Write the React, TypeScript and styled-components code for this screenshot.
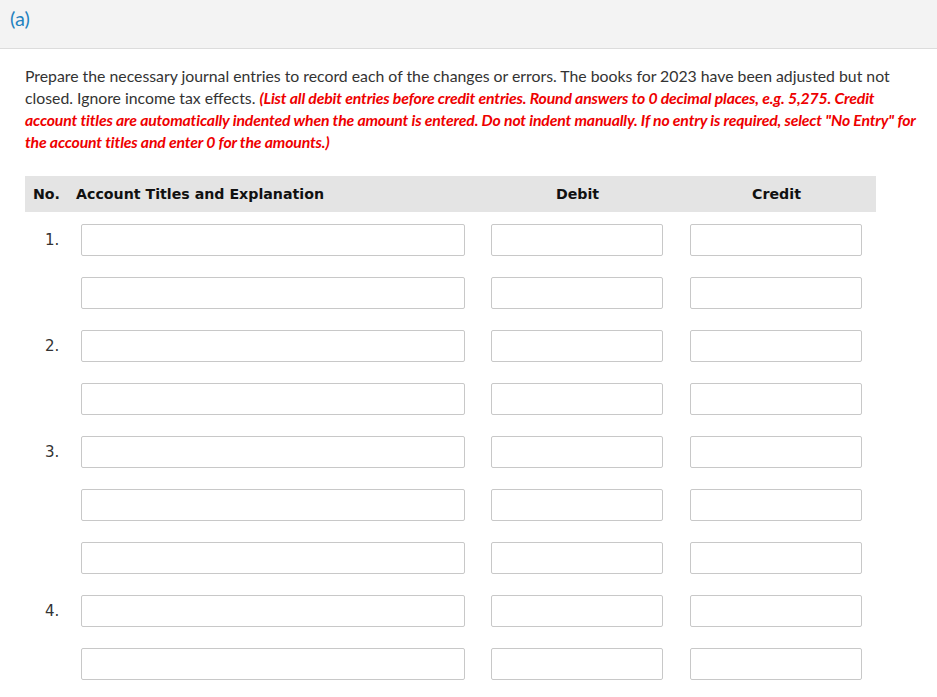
import React from "react"
import { createGlobalStyle, styled } from "styled-components"

const GlobalStyle = createGlobalStyle`
   html, body {
      margin: 0;
      padding: 0;
      background: #fff;
   }
   body {
      font-family: Lato, "Open Sans", sans-serif;
      color: #333;
   }
`

type Row = { no?: string }

const rows: Row[] = [
   { no: "1." }, {},
   { no: "2." }, {},
   { no: "3." }, {}, {},
   { no: "4." }, {},
]

export default function App() {
   return (
      <>
         <GlobalStyle />
         <StyledPartHeader>
            <StyledPartLabel>(a)</StyledPartLabel>
         </StyledPartHeader>
         <StyledBody>
            <StyledPrompt>
               Prepare the necessary journal entries to record each of the changes or errors. The books for 2023 have been adjusted but not closed. Ignore income tax effects.{" "}
               <StyledNote>
                  (List all debit entries before credit entries. Round answers to 0 decimal places, e.g. 5,275. Credit account titles are automatically indented when the amount is entered. Do not indent manually. If no entry is required, select "No Entry" for the account titles and enter 0 for the amounts.)
               </StyledNote>
            </StyledPrompt>
            <StyledTable>
               <StyledHeadRow>
                  <StyledHeadCell $align="left" $pad={8}>No.</StyledHeadCell>
                  <StyledHeadCell $align="left" $pad={0}>Account Titles and Explanation</StyledHeadCell>
                  <StyledHeadCell $align="center" $pad={0}>Debit</StyledHeadCell>
                  <StyledHeadCell $align="center" $pad={0}>Credit</StyledHeadCell>
               </StyledHeadRow>
               <StyledRows>
                  {rows.map((row, i) => (
                     <StyledRow key={i}>
                        <StyledNumber>{row.no}</StyledNumber>
                        <StyledAccountCell>
                           <StyledInput type="text" $width={384} />
                        </StyledAccountCell>
                        <StyledAmountCell>
                           <StyledInput type="text" $width={172} />
                        </StyledAmountCell>
                        <StyledAmountCell>
                           <StyledInput type="text" $width={172} />
                        </StyledAmountCell>
                     </StyledRow>
                  ))}
               </StyledRows>
            </StyledTable>
         </StyledBody>
      </>
   )
}

const StyledPartHeader = styled.div`
   height: 49px;
   background: #f3f3f3;
   border-bottom: 1px solid #dcdcdc;
   padding: 6px 0 0 10px;
   box-sizing: border-box;
`

const StyledPartLabel = styled.span`
   font-family: Lato, sans-serif;
   font-size: 20px;
   color: #1f82c0;
`

const StyledBody = styled.div`
   padding: 16px 18px 0 25px;
`

const StyledPrompt = styled.p`
   margin: 0;
   font-size: 15.8px;
   line-height: 22px;
   color: #333;
`

const StyledNote = styled.em`
   color: #ee0000;
   font-weight: 700;
   letter-spacing: -0.16px;
`

const StyledTable = styled.div`
   margin-top: 23px;
   width: 851px;
`

const StyledHeadRow = styled.div`
   display: grid;
   grid-template-columns: 51px 402px 199px 199px;
   height: 36px;
   align-items: center;
   background: #e4e4e4;
`

const StyledHeadCell = styled.div<{ $align: "left" | "center"; $pad: number }>`
   font-family: "DejaVu Sans", Verdana, sans-serif;
   font-weight: 700;
   font-size: 14.2px;
   color: #111;
   text-align: ${({ $align }) => $align};
   padding-left: ${({ $pad }) => $pad}px;
`

const StyledRows = styled.div`
   display: flex;
   flex-direction: column;
   gap: 21px;
   padding-top: 12px;
`

const StyledRow = styled.div`
   display: grid;
   grid-template-columns: 51px 402px 199px 199px;
   align-items: center;
   height: 32px;
`

const StyledNumber = styled.div`
   font-family: "DejaVu Sans", Verdana, sans-serif;
   font-size: 15px;
   color: #333;
   padding-left: 20px;
`

const StyledAccountCell = styled.div`
   padding-left: 5px;
`

const StyledAmountCell = styled.div`
   padding-left: 13px;
`

const StyledInput = styled.input<{ $width: number }>`
   display: block;
   box-sizing: border-box;
   width: ${({ $width }) => $width}px;
   height: 32px;
   margin: 0;
   border: 1px solid #c8c8c8;
   border-radius: 2px;
   background: #fff;
`
